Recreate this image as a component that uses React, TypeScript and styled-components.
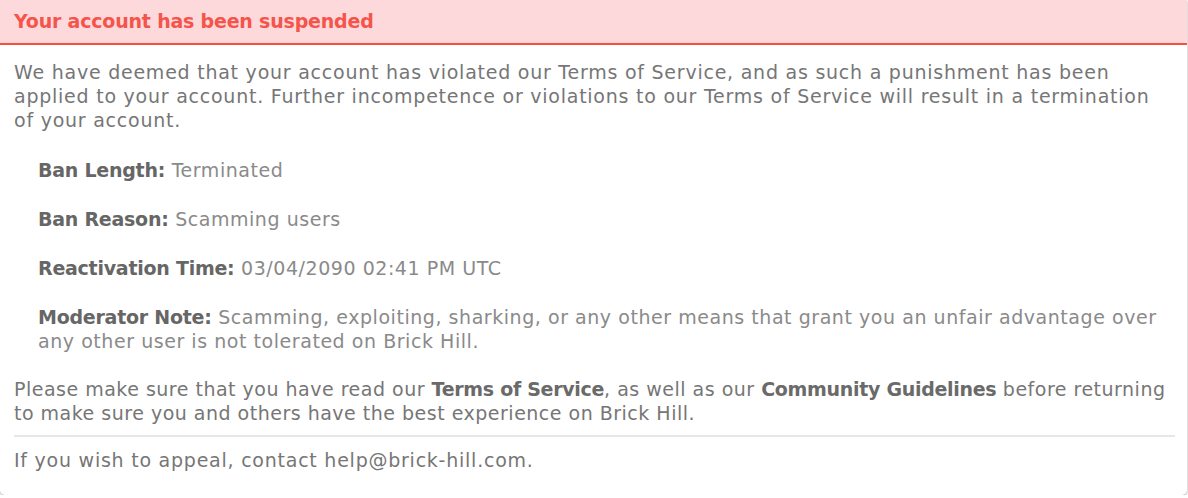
import React from "react";
import styled, { createGlobalStyle } from "styled-components";

const Global = createGlobalStyle`
  html, body { margin: 0; padding: 0; background: #ffffff; }
  body { font-family: "DejaVu Sans", "Open Sans", sans-serif; }
`;

const Card = styled.section`
  width: 1187px;
  height: 495px;
  box-sizing: border-box;
  background: #ffffff;
  border-radius: 0 0 5px 5px;
  box-shadow: 0 1px 3px rgba(0, 0, 0, 0.35);
  display: flex;
  flex-direction: column;
  overflow: hidden;
`;

const Header = styled.header`
  height: 45px;
  box-sizing: border-box;
  background: #fed9dc;
  border-bottom: 2px solid #f5503f;
  display: flex;
  align-items: center;
  padding: 0 14px 2px;
  color: #f5544a;
  font-size: 19px;
  font-weight: 700;
  letter-spacing: -0.2px;
`;

const Body = styled.div`
  padding: 15px 12px 0 14px;
  display: flex;
  flex-direction: column;
  font-size: 19px;
  line-height: 24px;
  letter-spacing: 0.76px;
  color: #767676;
`;

const Para = styled.p<{ $tight?: boolean }>`
  margin: 0;
  letter-spacing: ${(p) => (p.$tight ? "0.5px" : "inherit")};
`;

const Details = styled.div`
  display: flex;
  flex-direction: column;
  gap: 25px;
  padding: 26px 0 24px 24px;
`;

const Item = styled.p`
  margin: 0;
  color: #8a8a8a;
  letter-spacing: 0.55px;
`;

const Label = styled.b`
  color: #666666;
  font-weight: 700;
  letter-spacing: -0.25px;
`;

const Strong = styled.b`
  color: #6a6a6a;
  font-weight: 700;
  letter-spacing: -0.3px;
`;

const Divider = styled.hr`
  border: 0;
  height: 2px;
  background: #e6e6e6;
  margin: 10px 0 11px;
`;

const details: { label: string; value: React.ReactNode }[] = [
  { label: "Ban Length:", value: "Terminated" },
  { label: "Ban Reason:", value: "Scamming users" },
  { label: "Reactivation Time:", value: "03/04/2090 02:41 PM UTC" },
  {
    label: "Moderator Note:",
    value: (
      <>
        Scamming, exploiting, sharking, or any other means that grant you an unfair advantage over
        <br />
        any other user is not tolerated on Brick Hill.
      </>
    ),
  },
];

export default function App() {
  return (
    <>
      <Global />
      <Card>
        <Header>Your account has been suspended</Header>
        <Body>
          <Para>
            We have deemed that your account has violated our Terms of Service, and as such a punishment has been
            applied to your account. Further incompetence or violations to our Terms of Service will result in a
            termination
            <br />
            of your account.
          </Para>
          <Details>
            {details.map((d) => (
              <Item key={d.label}>
                <Label>{d.label}</Label> {d.value}
              </Item>
            ))}
          </Details>
          <Para $tight>
            Please make sure that you have read our <Strong>Terms of Service</Strong>, as well as our{" "}
            <Strong>Community Guidelines</Strong> before returning
            <br />
            to make sure you and others have the best experience on Brick Hill.
          </Para>
          <Divider />
          <Para>If you wish to appeal, contact help@brick-hill.com.</Para>
        </Body>
      </Card>
    </>
  );
}
